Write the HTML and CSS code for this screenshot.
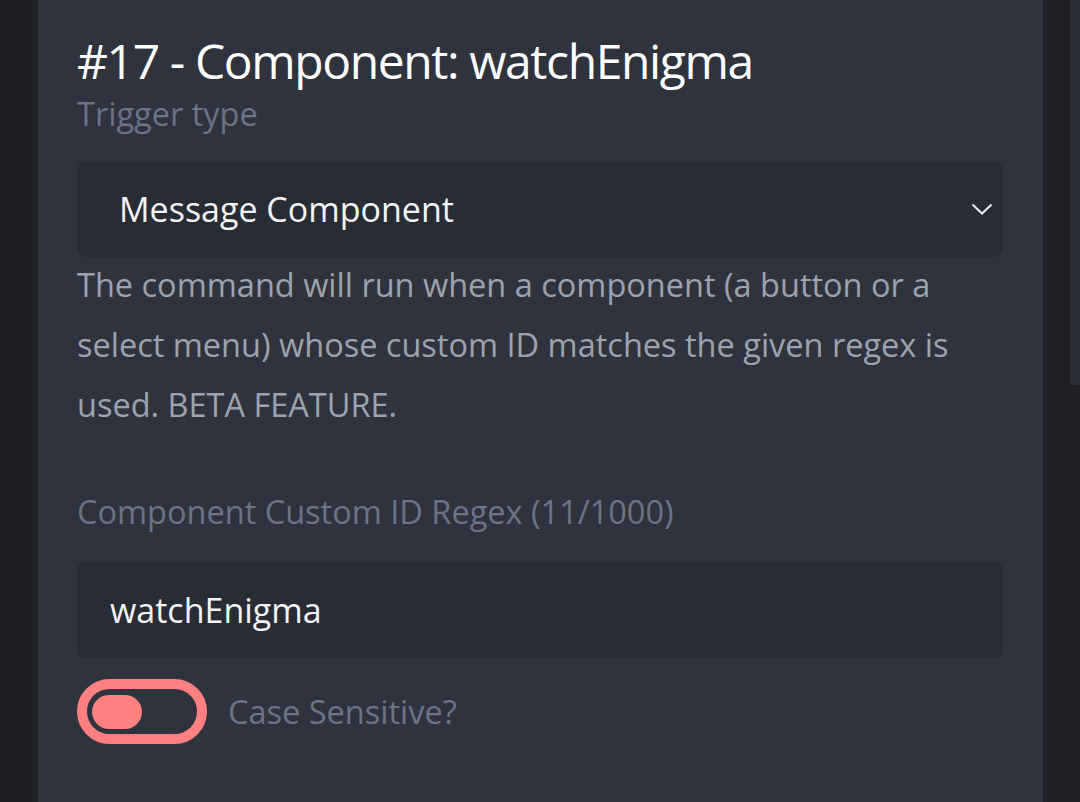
FILE: index.html
```html
<!DOCTYPE html>
<html lang="en">
<head>
<meta charset="utf-8">
<title>Component: watchEnigma</title>
<link rel="stylesheet" href="styles.css">
</head>
<body>
<div class="app">
  <div class="side-left"></div>
  <main class="panel">
    <h1 class="title">#17 - Component: watchEnigma</h1>
    <div class="field">
      <label class="label label-trigger">Trigger type</label>
      <div class="select">
        <span class="select-value">Message Component</span>
        <svg class="chevron" width="22" height="14" viewBox="0 0 22 14"><path d="M1.5 2.5 L11 11.5 L20.5 2.5" fill="none" stroke="#e6e8ec" stroke-width="2.2"/></svg>
      </div>
      <p class="help">The command will run when a component (a button or a select menu) whose custom ID matches the given regex is used. BETA FEATURE.</p>
    </div>
    <div class="field field-regex">
      <label class="label">Component Custom ID Regex (11/1000)</label>
      <div class="input">watchEnigma</div>
      <div class="toggle-row">
        <span class="toggle"><span class="knob"></span></span>
        <span class="toggle-label">Case Sensitive?</span>
      </div>
    </div>
  </main>
  <div class="side-right"><div class="scrollbar"></div></div>
</div>
</body>
</html>
```
FILE: styles.css
```css
html, body {
  margin: 0;
  padding: 0;
  height: 100%;
  overflow: hidden;
  background: #1f2127;
  font-family: "Open Sans", "Noto Sans", sans-serif;
}
.app {
  display: flex;
  height: 802px;
}
.side-left {
  width: 38px;
  background: #1e2025;
  flex: none;
}
.panel {
  width: 1005px;
  flex: none;
  background: #2e333d;
  box-sizing: border-box;
  padding: 30px 40px 0 39px;
}
.side-right {
  flex: 1;
  background: #1f2127;
  display: flex;
  justify-content: flex-end;
}
.scrollbar {
  width: 10px;
  height: 385px;
  background: #2b2e34;
}
.title {
  margin: 0;
  font-size: 48px;
  font-weight: 400;
  line-height: 62px;
  color: #ffffff;
  letter-spacing: -1.4px;
}
.label {
  display: block;
  font-size: 32.5px;
  line-height: 36px;
  color: #6b7385;
}
.label-trigger {
  margin-top: 4px;
}
.select {
  margin-top: 29px;
  height: 96px;
  border-radius: 10px;
  background: #282c34;
  display: flex;
  align-items: center;
  justify-content: space-between;
  padding: 0 10px 0 42px;
}
.select-value {
  font-size: 34px;
  color: #f2f3f5;
}
.help {
  margin: -2px 0 0 0;
  font-size: 32.5px;
  line-height: 60px;
  color: #9ca3af;
}
.field-regex {
  margin-top: 59px;
}
.input {
  margin-top: 32px;
  height: 96px;
  border-radius: 8px;
  background: #282c34;
  box-sizing: border-box;
  padding: 0 33px;
  display: flex;
  align-items: center;
  font-size: 34px;
  color: #f2f3f5;
}
.toggle-row {
  margin-top: 21px;
  display: flex;
  align-items: center;
  gap: 21px;
}
.toggle {
  width: 130px;
  height: 65px;
  box-sizing: border-box;
  border: 10px solid #ff8080;
  border-radius: 33px;
  background: #2e333d;
  display: flex;
  align-items: center;
  padding-left: 5px;
}
.knob {
  width: 50px;
  height: 34px;
  border-radius: 17px;
  background: #ff8080;
}
.toggle-label {
  font-size: 32.5px;
  color: #6b7385;
}
```
